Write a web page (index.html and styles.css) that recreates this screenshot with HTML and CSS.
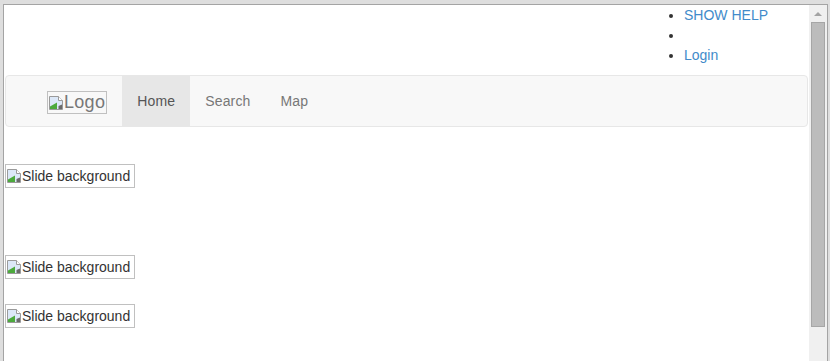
FILE: index.html
```html
<!DOCTYPE html>
<html lang="en">
	<head>
		<meta charset="UTF-8" />
		<meta name="viewport" content="width=device-width, initial-scale=1.0" />
		<title>Home</title>
		<link rel="stylesheet" href="styles.css">
	</head>
	<body>
		<div class="window">
			<div class="page">
				<div class="topbar">
					<ul class="top-links">
						<li><a href="#">SHOW HELP</a></li>
						<li></li>
						<li><a href="#">Login</a></li>
					</ul>
				</div>

				<div class="navbar">
					<a class="navbar-brand" href="#">
						<span class="broken-img logo">
							<svg class="broken-icon" width="16" height="16" viewBox="0 0 16 16">
								<path d="M1.5 1.5H10.5L14.5 5.5V14.5H1.5Z" fill="#dce8f8" stroke="#9a9a9a" />
								<path d="M10.5 1.5V5.5H14.5" fill="#fff" stroke="#9a9a9a" />
								<path d="M2 14V11.5L9 7.5V14Z" fill="#4caa3c" />
								<path d="M10.5 14V11L14 9.5V14Z" fill="#6a6a6a" />
							</svg>Logo</span>
					</a>
					<ul class="nav">
						<li class="active"><a href="#">Home</a></li>
						<li><a href="#">Search</a></li>
						<li><a href="#">Map</a></li>
					</ul>
				</div>

				<div class="slides">
					<div class="slide slide-first">
						<span class="broken-img">
							<svg class="broken-icon" width="16" height="16" viewBox="0 0 16 16">
								<path d="M1.5 1.5H10.5L14.5 5.5V14.5H1.5Z" fill="#dce8f8" stroke="#9a9a9a" />
								<path d="M10.5 1.5V5.5H14.5" fill="#fff" stroke="#9a9a9a" />
								<path d="M2 14V11.5L9 7.5V14Z" fill="#4caa3c" />
								<path d="M10.5 14V11L14 9.5V14Z" fill="#6a6a6a" />
							</svg>Slide background</span>
					</div>
					<div class="slide slide-second">
						<span class="broken-img">
							<svg class="broken-icon" width="16" height="16" viewBox="0 0 16 16">
								<path d="M1.5 1.5H10.5L14.5 5.5V14.5H1.5Z" fill="#dce8f8" stroke="#9a9a9a" />
								<path d="M10.5 1.5V5.5H14.5" fill="#fff" stroke="#9a9a9a" />
								<path d="M2 14V11.5L9 7.5V14Z" fill="#4caa3c" />
								<path d="M10.5 14V11L14 9.5V14Z" fill="#6a6a6a" />
							</svg>Slide background</span>
					</div>
					<div class="slide slide-third">
						<span class="broken-img">
							<svg class="broken-icon" width="16" height="16" viewBox="0 0 16 16">
								<path d="M1.5 1.5H10.5L14.5 5.5V14.5H1.5Z" fill="#dce8f8" stroke="#9a9a9a" />
								<path d="M10.5 1.5V5.5H14.5" fill="#fff" stroke="#9a9a9a" />
								<path d="M2 14V11.5L9 7.5V14Z" fill="#4caa3c" />
								<path d="M10.5 14V11L14 9.5V14Z" fill="#6a6a6a" />
							</svg>Slide background</span>
					</div>
				</div>
			</div>

			<div class="scrollbar">
				<div class="scroll-arrow"></div>
				<div class="scroll-thumb"></div>
			</div>
		</div>
	</body>
</html>
```

FILE: styles.css
```css
html,
body {
	margin: 0;
	height: 100%;
}

body {
	background-color: #dedede;
	padding: 4px 2px 0 3px;
	box-sizing: border-box;
	font-family: "Liberation Sans", Arial, sans-serif;
	font-size: 14px;
	line-height: 20px;
	color: #333;
	overflow: hidden;
}

.window {
	display: flex;
	height: 100%;
	border-top: 1px solid #a4a4a4;
	border-left: 1px solid #a4a4a4;
	border-right: 1px solid #a4a4a4;
	box-sizing: border-box;
}

.page {
	flex: 1;
	background-color: #fff;
	overflow: hidden;
}

a {
	text-decoration: none;
}

/* top links */
.topbar {
	display: flex;
	justify-content: flex-end;
	padding-right: 41px;
	margin-bottom: 10px;
}

.top-links {
	margin: 0;
	padding: 0;
	width: 84px;
}

.top-links li {
	height: 20px;
}

.top-links a {
	color: #428bca;
}

/* navbar */
.navbar {
	display: flex;
	align-items: flex-start;
	height: 50px;
	margin: 0 1px;
	background-color: #f8f8f8;
	border: 1px solid #e7e7e7;
	border-radius: 4px;
}

.navbar-brand {
	padding: 15px 15px 0 41px;
	font-size: 18px;
	line-height: 21px;
	color: #777;
}

.nav {
	display: flex;
	margin: 0;
	padding: 0;
	list-style: none;
}

.nav a {
	display: block;
	padding: 15px;
	line-height: 20px;
	letter-spacing: 0.15px;
	color: #777;
}

.nav .active a {
	background-color: #e7e7e7;
	color: #555;
}

/* broken images */
.broken-img {
	display: inline-flex;
	align-items: center;
	border: 1px solid #c0c0c0;
	padding: 1px 4px 1px 0;
	line-height: 20px;
	color: #333;
}

.broken-img.logo {
	line-height: 21px;
	padding: 0 1px 0 0;
	letter-spacing: 0.3px;
	color: #777;
}

.broken-icon {
	display: block;
	flex-shrink: 0;
}

/* slides */
.slides {
	display: flex;
	flex-direction: column;
	align-items: flex-start;
	padding-left: 1px;
}

.slide {
	display: flex;
}

.slide-first {
	margin-top: 37px;
}

.slide-second {
	margin-top: 67px;
}

.slide-third {
	margin-top: 25px;
}

/* scrollbar */
.scrollbar {
	width: 18px;
	background-color: #f0f0f0;
	display: flex;
	flex-direction: column;
	align-items: center;
}

.scroll-arrow {
	width: 0;
	height: 0;
	margin-top: 7px;
	border-left: 4px solid transparent;
	border-right: 4px solid transparent;
	border-bottom: 4px solid #a3a3a3;
}

.scroll-thumb {
	width: 12px;
	height: 303px;
	margin-top: 6px;
	background-color: #bcbcbc;
	border: 1px solid #a6a6a6;
}
```
